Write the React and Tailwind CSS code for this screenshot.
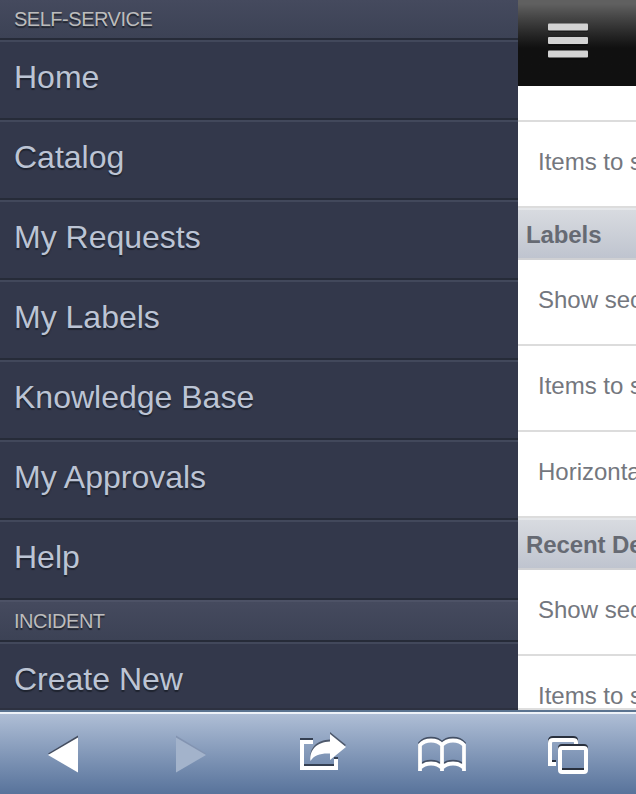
const SectionTitle = ({ children }) => (
  <div className="h-[42px] shrink-0 border-t-2 border-b-2 border-t-[#4d5266] border-b-[#262b38] bg-linear-to-b from-[#454a5e] to-[#3c4255] bg-clip-padding pl-[14px] text-[20px] leading-[39px] tracking-[-0.48px] text-[#bcbcbc] [text-shadow:0_2px_1px_#22262f]">
    {children}
  </div>
);

const MenuRow = ({ children }) => (
  <div className="h-20 shrink-0 border-t-2 border-b-2 border-t-[#42485b] border-b-[#262b38] bg-[#33384b] pl-[14px] text-[32px] leading-[71px] text-[#bcc4d4] [text-shadow:0_2px_1px_#1f2430]">
    {children}
  </div>
);

const Setting = ({ children }) => (
  <div className="h-[86px] shrink-0 border-b-2 border-[#dcdcdc] bg-white pl-5 text-[24px] leading-[80px] text-[#74777e]">
    {children}
  </div>
);

const GroupTitle = ({ children }) => (
  <div className="h-[52px] shrink-0 border-t-2 border-b-2 border-t-[#e5e7ea] border-b-[#cfd0d3] bg-linear-to-b from-[#d8dbe0] to-[#bfc4cf] pl-2 text-[24px] leading-[49px] font-bold tracking-[-0.1px] text-[#666a73]">
    {children}
  </div>
);

const Back = () => (
  <svg className="absolute top-[35px] left-[47px]" width="32" height="38" viewBox="0 0 32 38">
    <path d="M1 18.500L31 0.500V36.500Z" fill="#444d5f" />
    <path d="M1 20L31 2.500V37.500Z" fill="#fff" />
  </svg>
);

const Forward = () => (
  <svg className="absolute top-[35px] left-[175px]" width="32" height="38" viewBox="0 0 32 38">
    <path d="M1 0.500L31 18.500L1 36.500Z" fill="#8394b1" />
    <path d="M1 2.500L31 20L1 37.500Z" fill="#a3b3cb" />
  </svg>
);

const shareFrame = "M13 2H2V28H36V19";
const shareArrow = "M30 -6L46 7L30 20V13.500C21 13 14 15 10.500 21C9 10 17 2 30 1.500Z";

const Share = () => (
  <svg className="absolute top-[28px] left-[299px]" width="48" height="44" viewBox="-1 -12 48 44">
    <g transform="translate(0 -2)">
      <path d={shareFrame} fill="none" stroke="#354052" strokeWidth="4" />
      <path d={shareArrow} fill="#4e596c" />
    </g>
    <path d={shareFrame} fill="none" stroke="#fff" strokeWidth="4" />
    <path d={shareArrow} fill="#fff" />
  </svg>
);

const bookPath =
  "M2 34V8C7 2 19 2 24 8C29 2 41 2 46 8V34M24 8V34M2 31C7 25 19 25 24 31C29 25 41 25 46 31";

const Book = () => (
  <svg className="absolute top-[36px] left-[418px]" width="48" height="36" viewBox="0 0 48 36">
    <path d={bookPath} fill="none" stroke="#445065" strokeWidth="3.500" transform="translate(0 -1)" />
    <path d={bookPath} fill="none" stroke="#fff" strokeWidth="3.800" transform="translate(0 1)" />
  </svg>
);

const Pages = () => (
  <svg className="absolute top-[35px] left-[547px]" width="42" height="40" viewBox="0 0 42 40" fill="none" strokeWidth="4">
    <g stroke="#29303d" transform="translate(0 -2)">
      <path d="M29 9V7Q29 5 26 5H6Q3 5 3 8V29H9" />
      <rect x="13" y="13" width="26" height="24" rx="2" />
    </g>
    <g stroke="#fff">
      <path d="M29 9V7Q29 5 26 5H6Q3 5 3 8V29H9" />
      <rect x="13" y="13" width="26" height="24" rx="2" />
    </g>
  </svg>
);

export default function App() {
  return (
    <div className="flex h-[794px] w-[636px] flex-col overflow-hidden bg-white font-['Liberation_Sans',Arial,sans-serif] whitespace-nowrap">
      <div className="flex h-[710px] shrink-0 overflow-hidden">
        <nav className="flex h-[710px] w-[518px] shrink-0 flex-col overflow-hidden border-b-2 border-[#2d3140]">
          <div className="-mt-0.5 flex flex-col">
            <SectionTitle>SELF-SERVICE</SectionTitle>
            <MenuRow>Home</MenuRow>
            <MenuRow>Catalog</MenuRow>
            <MenuRow>My Requests</MenuRow>
            <MenuRow>My Labels</MenuRow>
            <MenuRow>Knowledge Base</MenuRow>
            <MenuRow>My Approvals</MenuRow>
            <MenuRow>Help</MenuRow>
            <SectionTitle>INCIDENT</SectionTitle>
            <MenuRow>Create New</MenuRow>
          </div>
        </nav>
        <main className="flex h-[710px] w-[118px] shrink-0 flex-col overflow-hidden border-b-2 border-[#dedede]">
          <header className="h-[86px] shrink-0 bg-linear-to-b from-[#606060] from-[4px] to-[#101010] to-[48px] pt-[23px] pl-[30px]">
            <svg width="40" height="38" viewBox="0 0 40 38">
              <g fill="#000" opacity=".35">
                <rect x="0" y="2" width="40" height="7" rx="1" />
                <rect x="0" y="16" width="40" height="7" rx="1" />
                <rect x="0" y="30" width="40" height="7" rx="1" />
              </g>
              <g fill="#d2d2d2">
                <rect x="0" y="0.500" width="40" height="7" rx="1" />
                <rect x="0" y="14" width="40" height="7" rx="1" />
                <rect x="0" y="27.500" width="40" height="7" rx="1" />
              </g>
            </svg>
          </header>
          <div className="h-9 shrink-0 border-b-2 border-[#dcdcdc]" />
          <Setting>Items to s</Setting>
          <GroupTitle>Labels</GroupTitle>
          <Setting>Show sec</Setting>
          <Setting>Items to s</Setting>
          <Setting>Horizonta</Setting>
          <GroupTitle>Recent De</GroupTitle>
          <Setting>Show sec</Setting>
          <Setting>Items to s</Setting>
        </main>
      </div>
      <footer className="relative h-[84px] shrink-0 border-t-2 border-[#5a7390] bg-linear-to-b from-[#b1c0d7] to-[#58739b]">
        <div className="h-0.5 bg-[#edf2f8]" />
        <div className="absolute -top-3 left-0 h-[84px] w-full">
          <Back />
          <Forward />
          <Share />
          <Book />
          <Pages />
        </div>
      </footer>
    </div>
  );
}
